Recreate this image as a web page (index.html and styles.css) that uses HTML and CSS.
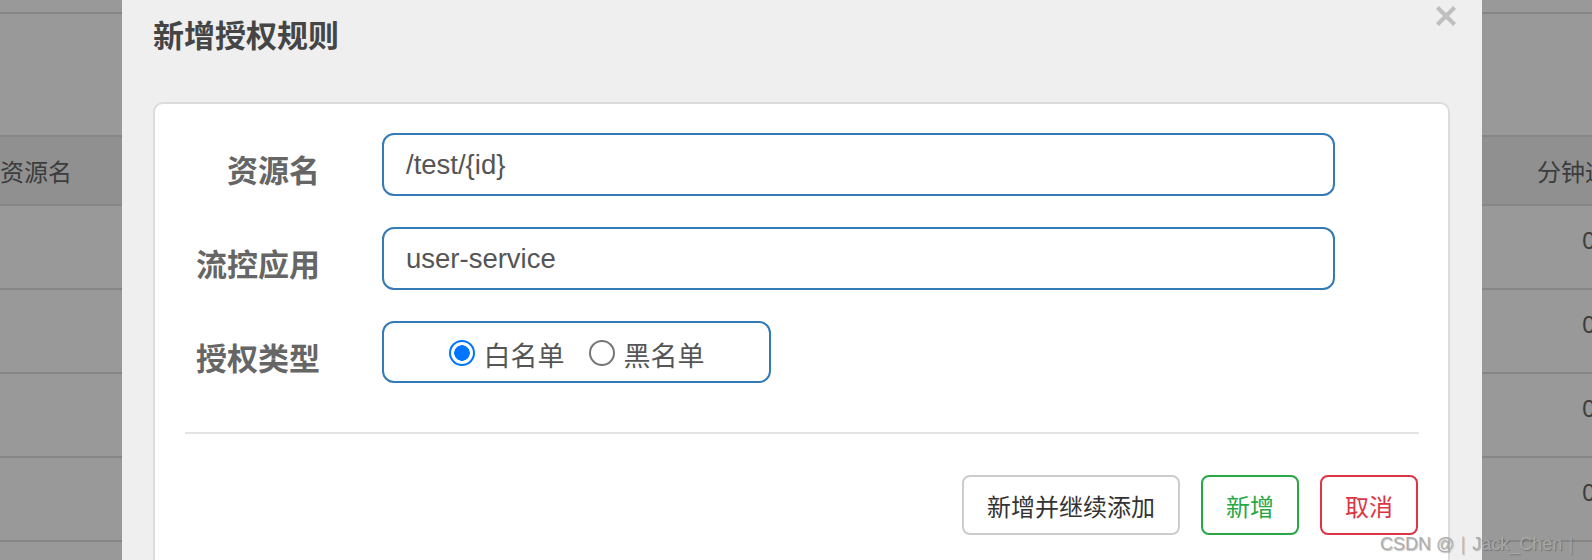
FILE: index.html
```html
<!DOCTYPE html>
<html lang="zh">
<head>
<meta charset="utf-8">
<title>新增授权规则</title>
<link rel="stylesheet" href="styles.css">
</head>
<body>
<div class="backdrop">
  <div class="trow trow-top"></div>
  <div class="trow trow-tall"></div>
  <div class="trow thead">
    <div class="cell cell-left">资源名</div>
    <div class="cell cell-right">分钟通过量</div>
  </div>
  <div class="trow tbody"><div class="cell cell-left"></div><div class="cell cell-right num">0</div></div>
  <div class="trow tbody"><div class="cell cell-left"></div><div class="cell cell-right num">0</div></div>
  <div class="trow tbody"><div class="cell cell-left"></div><div class="cell cell-right num">0</div></div>
  <div class="trow tbody"><div class="cell cell-left"></div><div class="cell cell-right num">0</div></div>
  <div class="trow tbody"><div class="cell cell-left"></div><div class="cell cell-right num">0</div></div>
</div>

<div class="modal">
  <button class="close" aria-label="关闭">
    <svg width="22" height="22" viewBox="0 0 22 22"><path d="M2.5 2.5 L19.5 19.5 M19.5 2.5 L2.5 19.5" stroke="#bfbfbf" stroke-width="4.2" stroke-linecap="butt" fill="none"/></svg>
  </button>
  <h1 class="title">新增授权规则</h1>
  <div class="card">
    <div class="form">
      <div class="frow">
        <label class="flabel">资源名</label>
        <div class="finput">/test/{id}</div>
      </div>
      <div class="frow">
        <label class="flabel">流控应用</label>
        <div class="finput">user-service</div>
      </div>
      <div class="frow">
        <label class="flabel">授权类型</label>
        <div class="radios">
          <span class="radio checked"></span><span class="rtext">白名单</span>
          <span class="radio"></span><span class="rtext">黑名单</span>
        </div>
      </div>
    </div>
    <div class="divider"></div>
    <div class="actions">
      <button class="btn btn-default">新增并继续添加</button>
      <button class="btn btn-success">新增</button>
      <button class="btn btn-danger">取消</button>
    </div>
  </div>
</div>

<div class="watermark">CSDN @｜Jack_Chen｜</div>
</body>
</html>
```

FILE: styles.css
```css
* { box-sizing: border-box; }

html, body {
  margin: 0;
  padding: 0;
}

body {
  position: relative;
  width: 1592px;
  height: 560px;
  overflow: hidden;
  background: #999999;
  font-family: "Noto Sans CJK SC", "Liberation Sans", sans-serif;
}

/* ---------- dimmed table behind ---------- */
.backdrop {
  width: 1592px;
}

.trow {
  display: flex;
  justify-content: space-between;
  border-bottom: 2px solid #868686;
}

.trow-top { height: 14px; }
.trow-tall { height: 123px; }

.thead {
  height: 69px;
  background: #909091;
  align-items: center;
}

.tbody {
  height: 84px;
  align-items: center;
  padding-bottom: 16px;
}

.cell {
  font-size: 24px;
  color: #3c3c3c;
  white-space: nowrap;
}

.cell-left { width: 100px; }

.cell-right {
  width: 55px;
  overflow: visible;
}

.num {
  padding-left: 45px;
  font-family: "Noto Sans", "Liberation Sans", sans-serif;
}

/* ---------- modal ---------- */
.modal {
  position: absolute;
  left: 122px;
  top: 0;
  width: 1360px;
  height: 620px;
  background: #efefef;
  padding: 16px 32px 0 31px;
}

.close {
  position: absolute;
  top: 5px;
  right: 25px;
  width: 22px;
  height: 22px;
  padding: 0;
  border: 0;
  background: transparent;
  display: block;
}

.close svg { display: block; }

.title {
  margin: 0 0 50px 0;
  font-size: 31px;
  line-height: 36px;
  font-weight: 700;
  color: #454545;
}

.card {
  width: 1297px;
  height: 520px;
  background: #ffffff;
  border: 2px solid #dcdcdc;
  border-radius: 10px;
  padding-top: 29px;
}

.form {
  display: flex;
  flex-direction: column;
  gap: 31px;
}

.frow {
  display: grid;
  grid-template-columns: 165px 953px;
  column-gap: 62px;
  align-items: center;
}

.flabel {
  text-align: right;
  font-size: 31px;
  font-weight: 700;
  color: #666666;
  padding-top: 8px;
}

.finput {
  height: 63px;
  border: 2px solid #337ab7;
  border-radius: 12px;
  padding: 0 22px;
  display: flex;
  align-items: center;
  font-family: "Liberation Sans", Arial, sans-serif;
  font-size: 27.5px;
  color: #555555;
}

.radios {
  width: 389px;
  height: 62px;
  border: 2px solid #337ab7;
  border-radius: 12px;
  display: flex;
  align-items: center;
  justify-content: center;
  padding-top: 2px;
}

.radio {
  width: 26px;
  height: 26px;
  border-radius: 50%;
  border: 2px solid #767676;
  background: #fff;
  flex: none;
  margin-right: 9px;
}

.radio.checked {
  border: 2px solid #0075ff;
  background: radial-gradient(circle, #0075ff 0 7.5px, #ffffff 8px);
}

.rtext {
  font-size: 27px;
  color: #555555;
  line-height: 1;
  padding-top: 3px;
  margin-right: 24px;
}

.rtext:last-child { margin-right: 0; }

.divider {
  height: 2px;
  background: #e4e4e4;
  margin: 49px 29px 0 30px;
}

.actions {
  display: flex;
  justify-content: flex-end;
  gap: 21px;
  padding-right: 30px;
  margin-top: 41px;
}

.btn {
  height: 60px;
  padding: 0 23px;
  border-radius: 8px;
  background: #ffffff;
  border: 2px solid #cccccc;
  font-family: "Noto Sans CJK SC", sans-serif;
  font-size: 24px;
  color: #333333;
}

.btn-success {
  border-color: #28a745;
  color: #28a745;
}

.btn-danger {
  border-color: #dc3545;
  color: #dc3545;
}

/* ---------- watermark ---------- */
.watermark {
  position: absolute;
  left: 1380px;
  top: 532px;
  font-family: "Liberation Sans", Arial, sans-serif;
  font-size: 18px;
  color: rgba(170, 170, 170, 0.95);
  text-shadow: 1px 1px 1px rgba(0, 0, 0, 0.25);
  white-space: nowrap;
}
```
